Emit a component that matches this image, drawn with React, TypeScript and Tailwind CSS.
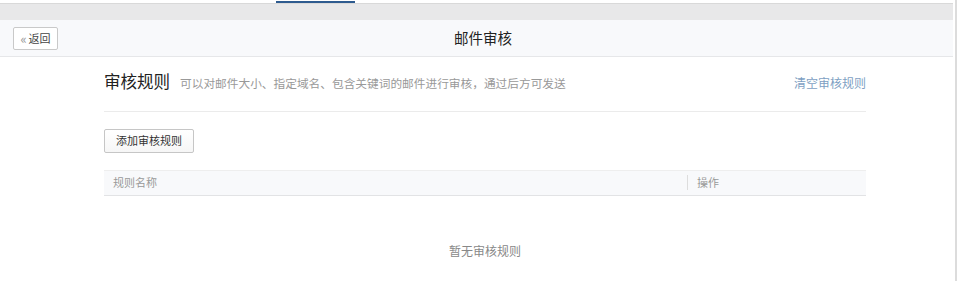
import React from "react";

export default function App() {
  const font = { fontFamily: '"Noto Sans CJK SC", "Noto Sans", sans-serif' };
  return (
    <div className="w-[957px] h-[281px] bg-white flex overflow-hidden" style={font}>
      <div className="w-[953px] flex flex-col">
        <div className="h-[3px] bg-white flex">
          <div className="ml-[276px] w-[79px] h-[2px] mt-[1px] bg-[#2e5b8f]" />
        </div>
        <div className="h-[1px] bg-[#d9d9d9]" />
        <div className="h-[16px] bg-[#e8e8e9]" />
        <div className="h-[37px] bg-[#f8f9fb] border-b border-[#e6e7e9] grid grid-cols-[1fr_auto_1fr] items-center pl-[13px]">
          <div>
            <button className="h-[23px] w-[45px] border border-[#c9c9c9] rounded-[2px] bg-white flex items-center justify-center text-[11px] text-[#444] leading-none">
              <span className="text-[#999] text-[13px] mr-[2px] leading-none">«</span>返回
            </button>
          </div>
          <div className="text-[14.5px] text-[#222]">邮件审核</div>
          <div />
        </div>
        <div className="pl-[104px]">
          <div className="w-[762px]">
            <div className="flex items-baseline justify-between pt-[12px] pb-[18px] border-b border-[#ebebeb]">
              <div className="flex items-baseline">
                <span className="text-[16.5px] leading-[24px] text-[#222]">审核规则</span>
                <span className="ml-[10px] text-[11.7px] text-[#999]">可以对邮件大小、指定域名、包含关键词的邮件进行审核，通过后方可发送</span>
              </div>
              <span className="text-[12px] text-[#7e9fc3]">清空审核规则</span>
            </div>
            <div className="mt-[14px]">
              <button className="h-[24px] px-[11px] border border-[#c6c6c6] rounded-[2px] bg-gradient-to-b from-white to-[#f6f6f6] text-[11px] text-[#333] leading-none">
                添加审核规则
              </button>
            </div>
            <div className="mt-[17px] h-[26px] bg-[#f8f9fb] border-t border-b border-t-[#eeeeee] border-b-[#e2e3e5] flex items-center text-[11px] text-[#999]">
              <div className="flex-1 pl-[9px]">规则名称</div>
              <div className="w-[179px] border-l border-[#dddddd] pl-[9px] leading-[15px]">操作</div>
            </div>
            <div className="pt-[46px] text-center text-[12px] text-[#888]">暂无审核规则</div>
          </div>
        </div>
      </div>
      <div className="w-[2px] bg-white" />
      <div className="w-[2px] bg-[#dcdcdc]" />
    </div>
  );
}
